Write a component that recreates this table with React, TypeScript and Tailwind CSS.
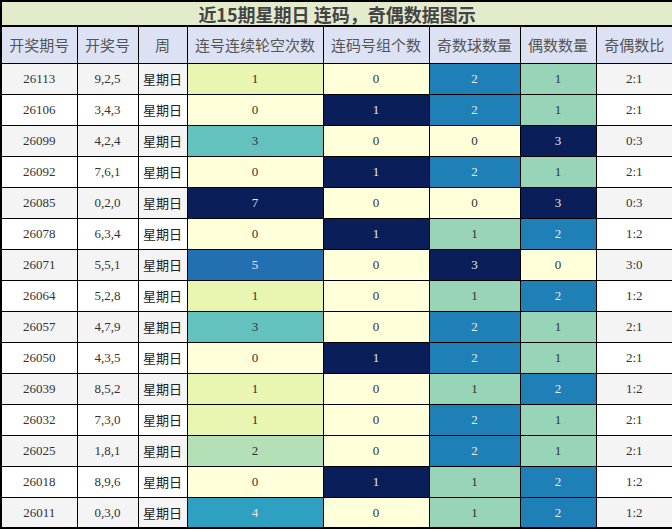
import React from "react";

type Row = [string, string, number, number, number, number, string];

const rows: Row[] = [
  ["26113", "9,2,5", 1, 0, 2, 1, "2:1"],
  ["26106", "3,4,3", 0, 1, 2, 1, "2:1"],
  ["26099", "4,2,4", 3, 0, 0, 3, "0:3"],
  ["26092", "7,6,1", 0, 1, 2, 1, "2:1"],
  ["26085", "0,2,0", 7, 0, 0, 3, "0:3"],
  ["26078", "6,3,4", 0, 1, 1, 2, "1:2"],
  ["26071", "5,5,1", 5, 0, 3, 0, "3:0"],
  ["26064", "5,2,8", 1, 0, 1, 2, "1:2"],
  ["26057", "4,7,9", 3, 0, 2, 1, "2:1"],
  ["26050", "4,3,5", 0, 1, 2, 1, "2:1"],
  ["26039", "8,5,2", 1, 0, 1, 2, "1:2"],
  ["26032", "7,3,0", 1, 0, 2, 1, "2:1"],
  ["26025", "1,8,1", 2, 0, 2, 1, "2:1"],
  ["26018", "8,9,6", 0, 1, 1, 2, "1:2"],
  ["26011", "0,3,0", 4, 0, 1, 2, "1:2"],
];

// 连号连续轮空次数 0..7
const gapColor: Record<number, string> = {
  0: "bg-[#ffffd9] text-[#333]",
  1: "bg-[#e9f6b1] text-[#333]",
  2: "bg-[#b4e0b7] text-[#333]",
  3: "bg-[#63c1be] text-[#333]",
  4: "bg-[#2ea0c2] text-[#e8e8e8]",
  5: "bg-[#2270b2] text-[#e8e8e8]",
  7: "bg-[#0a1e59] text-[#e8e8e8]",
};

const groupColor: Record<number, string> = {
  0: "bg-[#ffffd9] text-[#333]",
  1: "bg-[#0a1e59] text-[#e8e8e8]",
};

const countColor: Record<number, string> = {
  0: "bg-[#ffffd9] text-[#333]",
  1: "bg-[#98d5b8] text-[#333]",
  2: "bg-[#1f80b8] text-[#e8e8e8]",
  3: "bg-[#0a1e59] text-[#e8e8e8]",
};

const headers = ["开奖期号", "开奖号", "周", "连号连续轮空次数", "连码号组个数", "奇数球数量", "偶数数量", "奇偶数比"];
const widths = ["w-[76px]", "w-[61px]", "w-[49px]", "w-[136px]", "w-[106px]", "w-[91px]", "w-[76px]", "w-[77px]"];

export default function App() {
  return (
    <div className="w-[672px] h-[530px] overflow-hidden bg-white">
      <table className="w-[672px] table-fixed border-collapse border-2 border-black">
        <colgroup>
          {widths.map((w, i) => (
            <col key={i} className={w} />
          ))}
        </colgroup>
        <thead>
          <tr className="h-[25px]">
            <th
              colSpan={8}
              className="p-0 bg-[#e3ebcd] border-b-2 border-black text-[18px] font-bold text-[#444] font-['Noto_Sans_CJK_SC',sans-serif] leading-none"
            >
              近15期星期日 连码，奇偶数据图示
            </th>
          </tr>
          <tr className="h-[37px]">
            {headers.map((h) => (
              <th
                key={h}
                className="p-0 whitespace-nowrap bg-[#dce2f3] border border-black font-normal text-[15px] text-[#555] font-['Noto_Sans_CJK_SC',sans-serif] leading-none"
              >
                {h}
              </th>
            ))}
          </tr>
        </thead>
        <tbody className="text-[13px] font-['Liberation_Serif',serif]">
          {rows.map((r, i) => {
            const stripe = i % 2 === 0 ? "bg-[#f4f4f4]" : "bg-white";
            return (
              <tr key={r[0]} className="h-[31px] text-center">
                <td className={`${stripe} p-0 border border-black text-[#333]`}>{r[0]}</td>
                <td className={`${stripe} p-0 border border-black text-[#333]`}>{r[1]}</td>
                <td className={`${stripe} p-0 border border-black text-[#222] text-[13px] font-['Noto_Sans_CJK_SC',sans-serif]`}>
                  星期日
                </td>
                <td className={`${gapColor[r[2]]} p-0 border border-black`}>{r[2]}</td>
                <td className={`${groupColor[r[3]]} p-0 border border-black`}>{r[3]}</td>
                <td className={`${countColor[r[4]]} p-0 border border-black`}>{r[4]}</td>
                <td className={`${countColor[r[5]]} p-0 border border-black`}>{r[5]}</td>
                <td className={`${stripe} p-0 border border-black text-[#333]`}>{r[6]}</td>
              </tr>
            );
          })}
        </tbody>
      </table>
    </div>
  );
}
